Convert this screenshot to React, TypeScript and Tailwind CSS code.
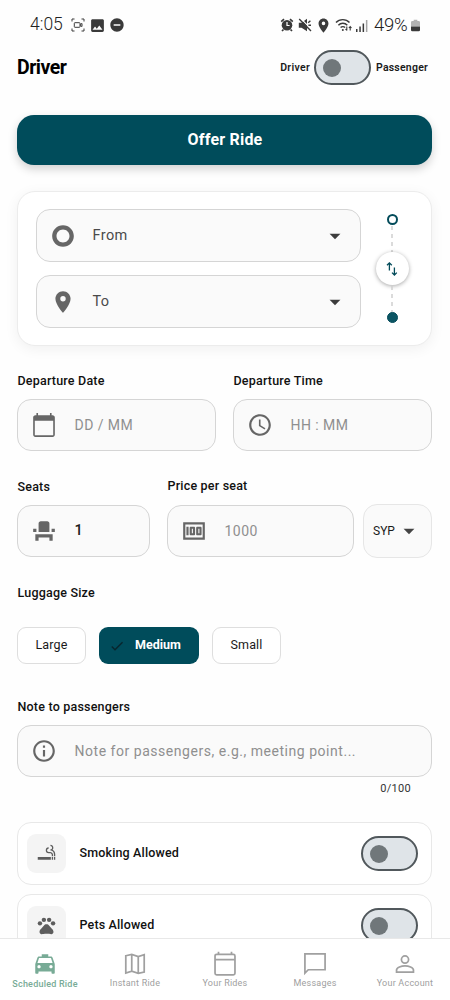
import React from 'react';
import {
  MdAccessTime,
  MdArrowDropDown,
  MdCheck,
  MdEventSeat,
  MdImage,
  MdInfoOutline,
  MdLocalTaxi,
  MdLocationOn,
  MdMoney,
  MdPets,
  MdRemoveCircle,
  MdSmokingRooms,
  MdTripOrigin,
} from 'react-icons/md';

const CalendarIcon = ({ className }: { className?: string }) => (
  <svg viewBox="0 0 24 24" fill="currentColor" className={className}>
    <path d="M20 3h-1V1h-1.500v2h-11V1H5v2H4c-1.100 0-2 .9-2 2v16c0 1.100.9 2 2 2h16c1.100 0 2-.9 2-2V5c0-1.100-.9-2-2-2zm.500 18.500h-17V8h17v13.500z" />
  </svg>
);

// Thin line icons for the bottom navigation
const NavIcon = ({ children }: { children: React.ReactNode }) => (
  <svg viewBox="0 0 24 24" fill="none" stroke="currentColor" strokeWidth="1.6" className="size-[26px]">
    {children}
  </svg>
);

const SwapIcon = () => (
  <svg viewBox="0 0 16 16" className="size-4" fill="none" stroke="#034b5a" strokeWidth="1.3">
    <path d="M5.400 9.600V2M3 4.200l2.400-2.400 2.400 2.400M10.400 6.400v7.600M8 11.600l2.400 2.400 2.400-2.400" />
  </svg>
);

const StatusBar = () => (
  <div className="flex h-[50px] shrink-0 items-center pl-[30px] pr-[30px] text-[#3a3a3a]">
    <span className="w-[34px] text-[17.500px] font-light leading-none text-[#222]">4:05</span>
    <svg viewBox="0 0 14 14" className="ml-[6.500px] size-[14px]" fill="none" stroke="currentColor" strokeWidth="1">
      <path d="M1 3.500V1h2.500M10.500 1H13v2.500M13 10.500V13h-2.500M3.500 13H1v-2.500" />
      <rect x="3.300" y="4.700" width="5.700" height="4.600" rx=".6" />
      <path d="M9 6.500l2-1v3l-2-1" />
    </svg>
    <MdImage className="ml-[4px] size-[17px]" />
    <MdRemoveCircle className="ml-[3px] size-[16px]" />
    <div className="flex-1" />
    <svg viewBox="0 0 14 14" className="size-[14px]" fill="currentColor">
      <circle cx="7" cy="7.200" r="5.300" />
      <path d="M1.200 3.600L4 1.200M12.800 3.600L10 1.200M3.500 11.500L2 13M10.500 11.500L12 13" stroke="currentColor" strokeWidth="1.700" />
      <path d="M7 4v3.500h2.600" fill="none" stroke="#fff" strokeWidth="1.200" />
    </svg>
    <svg viewBox="0 0 14 14" className="ml-[4.500px] size-[14px]" fill="currentColor">
      <path d="M.8 4.800h2.800L9 .8v12.400L3.600 9.800H.8z" />
      <path d="M2.400 .2l11.600 11.600" stroke="#fff" strokeWidth="1.200" />
      <path d="M1.200 1l11.800 12M10.200 4.800l2.200-2M10.400 7.300h2.600" fill="none" stroke="currentColor" strokeWidth="1.400" />
    </svg>
    <MdLocationOn className="ml-[3px] size-[17px]" />
    <svg viewBox="0 0 18 14" className="ml-[3px] h-[14px] w-[18px]" fill="none" stroke="currentColor" strokeWidth="1.400">
      <path d="M1 4.500C4.500 .6 11 .6 14.500 4.500M3.400 7.200c2.400-2.700 6.500-2.700 8.900 0M5.600 9.600c1.300-1.300 3.200-1.300 4.500 0" />
      <circle cx="7.800" cy="12" r="1" fill="currentColor" stroke="none" />
      <path d="M11.800 8.500v4M10.500 11l1.300 1.500M15.200 12.500v-4M13.900 10l1.300-1.500 1.300 1.500" strokeWidth="1.100" />
    </svg>
    <svg viewBox="0 0 12 13" className="ml-[3px] h-[13px] w-[12px]" fill="currentColor">
      <path d="M0 10h1.500v3H0zM3.300 7.500h1.500V13H3.300zM6.600 4.500h1.500V13H6.600z" />
      <path d="M9.900 1h1.500v12H9.900z" opacity=".45" />
    </svg>
    <span className="ml-[6px] w-[36px] text-[18.500px] font-light leading-none tracking-[-0.200px] text-[#222]">49%</span>
    <svg viewBox="0 0 10 13" className="ml-px h-[13px] w-[9px]">
      <path d="M3 0h4v1.500h1.500q1.500 0 1.500 1.500v4.500H0V3q0-1.500 1.500-1.500H3z" fill="#b3b3b3" />
      <path d="M0 7.500h10v4q0 1.500-1.500 1.500h-7Q0 13 0 11.500z" fill="#3a3a3a" />
    </svg>
  </div>
);

const Switch = () => (
  <div className="flex h-[35px] w-[57px] shrink-0 items-center rounded-full border-2 border-[#51585c] bg-[#dfe4e8] pl-[7px]">
    <div className="size-[18px] rounded-full bg-[#70777a]" />
  </div>
);

const Label = ({ children }: { children: React.ReactNode }) => (
  <div className="pl-[0.500px] text-[12.500px] font-medium leading-[18px] tracking-[0.200px] text-[#111]">{children}</div>
);

const Field = ({ icon, text, className = 'h-[52px]', children }: any) => (
  <div className={`flex items-center rounded-[14px] border border-[#d5d5d5] bg-[#fafafa] pl-[12.500px] ${className}`}>
    <div className="flex w-[26px] shrink-0 text-[#666]">{icon}</div>
    <span className="ml-[18px] flex-1 whitespace-nowrap text-[14.500px] leading-5">{text}</span>
    {children}
  </div>
);

const OptionRow = ({ icon, title }: any) => (
  <div className="flex h-[63px] shrink-0 items-center rounded-[14px] border border-[#e8e8e8] bg-white pl-[9px] pr-[13px]">
    <div className="flex size-[39px] items-center justify-center rounded-[9px] bg-[#f4f4f4] text-[#5d5d5d]">{icon}</div>
    <span className="ml-[13.500px] flex-1 text-[12.500px] font-medium tracking-[0.150px] text-[#111]">{title}</span>
    <Switch />
  </div>
);

const NavItem = ({ icon, title, active }: any) => (
  <div className={`flex w-[90px] flex-col items-center ${active ? 'text-[#78ab96]' : 'text-[#a0a0a0]'}`}>
    <div className="flex h-[27px] items-center">{icon}</div>
    <span className={`whitespace-nowrap text-[9px] leading-3 tracking-[0.220px] ${active ? 'mt-px font-medium' : ''}`}>{title}</span>
  </div>
);

const App: React.FC = () => {
  return (
    <div className="flex h-[1000px] w-[450px] flex-col overflow-hidden bg-[#fefefe] font-['Roboto',sans-serif] text-[#1a1a1a]">
      <main className="flex h-[938px] shrink-0 flex-col overflow-hidden">
        <StatusBar />

        {/* Header */}
        <header className="flex h-[35px] shrink-0 items-center pl-[17px] pr-[22px]">
          <h1 className="flex-1 text-[19.500px] font-bold leading-none tracking-[-0.500px] text-black">Driver</h1>
          <span className="text-[10.500px] font-semibold tracking-[0.300px]">Driver</span>
          <div className="ml-[4px] mr-[5px]">
            <Switch />
          </div>
          <span className="text-[10.500px] font-semibold tracking-[0.220px]">Passenger</span>
        </header>

        <div className="flex flex-col pl-[17px] pr-[18px] pt-[30px]">
          <button className="h-[50px] shrink-0 rounded-[17px] bg-[#004c5b] pl-px text-[16px] font-bold tracking-[0.200px] text-white shadow-[0_4px_10px_rgba(0,0,0,0.180)]">
            Offer Ride
          </button>

          {/* Route */}
          <section className="mt-[26px] flex h-[155px] shrink-0 rounded-[18px] border border-[#ececec] bg-white pl-[18px] pt-[17px] shadow-[0_3px_14px_rgba(0,0,0,0.060)]">
            <div className="flex w-[325px] flex-col gap-[13px] text-[#4a4a4a]">
              <Field
                className="h-[53px]"
                icon={<MdTripOrigin className="size-[26px]" />}
                text={<span className="-ml-px tracking-[0.400px]">From</span>}
              >
                <MdArrowDropDown className="mr-[12px] size-[26px] text-[#3c3c3c]" />
              </Field>
              <Field
                className="h-[53px]"
                icon={<MdLocationOn className="size-[26px]" />}
                text={<span className="-ml-px tracking-[0.400px]">To</span>}
              >
                <MdArrowDropDown className="mr-[12px] size-[26px] text-[#3c3c3c]" />
              </Field>
            </div>
            <div className="ml-[13.500px] flex w-[35px] flex-col items-center pt-[5px]">
              <div className="size-[11px] shrink-0 rounded-full border-2 border-[#034b5a]" />
              <svg className="h-[27px] w-[2px] shrink-0" viewBox="0 0 2 27">
                <path d="M1 1v26" stroke="#d0d0d0" strokeWidth="1.500" strokeDasharray="4 4" />
              </svg>
              <div className="flex size-[33px] shrink-0 items-center justify-center rounded-full bg-white shadow-[0_1px_4px_rgba(0,0,0,0.350)]">
                <SwapIcon />
              </div>
              <svg className="h-[27px] w-[2px] shrink-0" viewBox="0 0 2 27">
                <path d="M1 1v26" stroke="#d0d0d0" strokeWidth="1.500" strokeDasharray="4 4" />
              </svg>
              <div className="size-[11px] shrink-0 rounded-full border border-[#034b5a] bg-[#0b5563]" />
            </div>
          </section>

          {/* Date and time */}
          <section className="mt-[26px] flex gap-[17px] text-[#8f8f8f]">
            <div className="flex-1">
              <Label>Departure Date</Label>
              <div className="mt-[9px]">
                <Field
                  icon={<CalendarIcon className="size-[26px]" />}
                  text={<span className="text-[14px] tracking-[0.450px]">DD / MM</span>}
                />
              </div>
            </div>
            <div className="flex-1">
              <Label>Departure Time</Label>
              <div className="mt-[9px]">
                <Field
                  icon={<MdAccessTime className="size-[26px]" />}
                  text={<span className="text-[14px] tracking-[0.450px]">HH : MM</span>}
                />
              </div>
            </div>
          </section>

          {/* Seats and price */}
          <section className="mt-[26px] flex items-end">
            <div className="w-[133px]">
              <Label>Seats</Label>
              <div className="mt-[9px]">
                <Field icon={<MdEventSeat className="size-[26px]" />} text={<span className="font-medium text-[#1a1a1a]">1</span>} />
              </div>
            </div>
            <div className="ml-[17px] w-[187px] text-[#8f8f8f]">
              <Label>Price per seat</Label>
              <div className="mt-[10px]">
                <Field
                  icon={<MdMoney className="size-[26px]" />}
                  text={<span className="text-[14px] tracking-[0.500px]">1000</span>}
                />
              </div>
            </div>
            <div className="-mb-px ml-[9px] flex h-[54px] flex-1 items-center rounded-[14px] border border-[#e6e6e6] bg-[#fafafa] pl-[9px]">
              <span className="text-[12px]">SYP</span>
              <MdArrowDropDown className="ml-[1px] size-[26px] text-[#444]" />
            </div>
          </section>

          {/* Luggage */}
          <section className="mt-[27px]">
            <Label>Luggage Size</Label>
            <div className="mt-[25px] flex gap-[13px] text-[12.500px] tracking-[0.150px]">
              <div className="flex h-[37px] w-[69px] items-center justify-center rounded-[9px] border border-[#dedede] bg-white">Large</div>
              <div className="flex h-[37px] w-[100px] items-center rounded-[9px] bg-[#004c5b] pl-[10px] font-bold tracking-normal text-white">
                <MdCheck className="size-[16px] text-[#08262d]" />
                <span className="ml-[10px]">Medium</span>
              </div>
              <div className="flex h-[37px] w-[69px] items-center justify-center rounded-[9px] border border-[#dedede] bg-white">Small</div>
            </div>
          </section>

          {/* Note */}
          <section className="mt-[34px] text-[#8f8f8f]">
            <Label>Note to passengers</Label>
            <div className="mt-[9px]">
              <Field
                icon={<MdInfoOutline className="size-[26px]" />}
                text={<span className="text-[14px] tracking-[0.530px]">Note for passengers, e.g., meeting point...</span>}
              />
            </div>
            <div className="mt-[4px] pr-[21px] text-right text-[11px] leading-[16px] tracking-[0.300px] text-[#333]">0/100</div>
          </section>

          <section className="mt-[25px] flex flex-col gap-[9px]">
            <OptionRow icon={<MdSmokingRooms className="size-[21px]" />} title="Smoking Allowed" />
            <OptionRow icon={<MdPets className="size-[21px]" />} title="Pets Allowed" />
          </section>
        </div>
      </main>

      {/* Bottom navigation */}
      <nav className="flex h-[62px] shrink-0 border-t border-[#e8e8e8] bg-white pt-[11px]">
        <NavItem active icon={<MdLocalTaxi className="size-[26px]" />} title="Scheduled Ride" />
        <NavItem
          icon={
            <NavIcon>
              <path d="M3.500 4.400L9 3.200l6 2 5.500-1.700v16L15 20.700l-6-2-5.500 1.700zM9 3.200v15.500M15 5.200v15.500" />
            </NavIcon>
          }
          title="Instant Ride"
        />
        <NavItem
          icon={
            <NavIcon>
              <rect x="2.800" y="3.200" width="18.400" height="18.900" rx="1.500" />
              <path d="M2.800 8h18.400M6 .8v2.400M18 .8v2.400" />
            </NavIcon>
          }
          title="Your Rides"
        />
        <NavItem
          icon={
            <NavIcon>
              <path d="M2.700 2.700h18.600v14.600H5.800l-3.100 3.200z" />
            </NavIcon>
          }
          title="Messages"
        />
        <NavItem
          icon={
            <NavIcon>
              <circle cx="12" cy="7.900" r="3.300" />
              <path d="M4.200 19.500v-2c0-2.300 4.500-3.800 7.800-3.800s7.800 1.500 7.800 3.800v2z" />
            </NavIcon>
          }
          title="Your Account"
        />
      </nav>
    </div>
  );
};

export default App;
